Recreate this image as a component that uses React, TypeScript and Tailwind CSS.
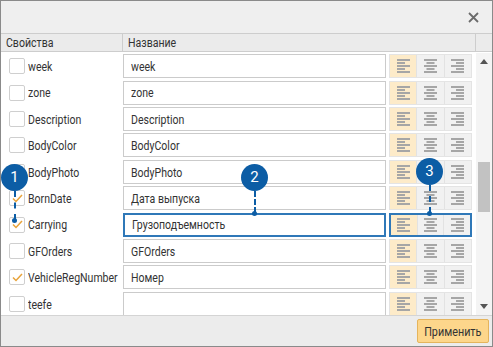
import { ReactNode } from 'react';

type Row = { key: string; title: string; checked?: boolean; active?: boolean };

const rows: Row[] = [
  { key: 'week', title: 'week' },
  { key: 'zone', title: 'zone' },
  { key: 'Description', title: 'Description' },
  { key: 'BodyColor', title: 'BodyColor' },
  { key: 'BodyPhoto', title: 'BodyPhoto' },
  { key: 'BornDate', title: 'Дата выпуска', checked: true },
  { key: 'Carrying', title: 'Грузоподъемность', checked: true, active: true },
  { key: 'GFOrders', title: 'GFOrders' },
  { key: 'VehicleRegNumber', title: 'Номер', checked: true },
  { key: 'teefe', title: '' },
];

const AlignIcon = ({ mode }: { mode: 'left' | 'center' | 'right' }) => {
  const long = 13;
  const short = 8;
  const x = (w: number) => (mode === 'left' ? 0 : mode === 'center' ? (long - w) / 2 : long - w);
  const widths = [long, short, long, short, long];
  return (
    <svg width="13" height="14" viewBox="0 0 13 14">
      {widths.map((w, i) => (
        <rect key={i} x={x(w)} y={i * 3} width={w} height="2" fill="#a6a6a6" />
      ))}
    </svg>
  );
};

const Checkbox = ({ checked }: { checked?: boolean }) => (
  <span className="w-[16px] h-[16px] shrink-0 border border-[#cfcfcf] rounded-[2px] bg-white flex items-center justify-center">
    {checked && (
      <svg width="11" height="9" viewBox="0 0 11 9">
        <path d="M1 4.5 L4 7.5 L10 1" fill="none" stroke="#e8a33a" strokeWidth="1.5" />
      </svg>
    )}
  </span>
);

// narrow text: the original uses a condensed face
const Narrow = ({ children }: { children: ReactNode }) => (
  <span className="inline-block origin-left scale-x-[0.78] whitespace-nowrap">{children}</span>
);

const Callout = ({ n, className, line }: { n: string; className: string; line: string }) => (
  <div className={`absolute flex flex-col items-center ${className}`}>
    <div className="w-[27px] h-[27px] rounded-full bg-[#0c5da5] text-white text-[15px] flex items-center justify-center">
      {n}
    </div>
    <div className={`w-0 border-l-2 border-dashed border-[#0c5da5] ${line}`} />
    <div className="w-[5px] h-[5px] rounded-full bg-[#0c5da5] -mt-[2px]" />
  </div>
);

const AlignGroup = ({ active }: { active?: boolean }) => (
  <div
    className={`flex h-[24px] w-[83px] ${
      active ? 'border-2 border-[#2f78b8]' : 'border border-[#e4e4e4]'
    }`}
  >
    <span className="flex-1 bg-[#fdebc9] flex items-center justify-center">
      <AlignIcon mode="left" />
    </span>
    <span className="flex-1 bg-[#f1f1f1] border-l border-[#e2e2e2] flex items-center justify-center">
      <AlignIcon mode="center" />
    </span>
    <span className="flex-1 bg-[#f1f1f1] border-l border-[#e2e2e2] flex items-center justify-center">
      <AlignIcon mode="right" />
    </span>
  </div>
);

const HeadCell = ({ children, className }: { children?: ReactNode; className: string }) => (
  <div className={`flex items-center px-[5px] text-[12px] text-[#333] ${className}`}>
    <span className="inline-block origin-left scale-x-[0.88] whitespace-nowrap">{children}</span>
  </div>
);

export default function App() {
  return (
    <div
      className="relative w-[493px] h-[347px] border border-[#8a8a8a] bg-white flex flex-col overflow-hidden text-[#333]"
      style={{ fontFamily: 'Roboto, "Liberation Sans", sans-serif' }}
    >
      <div className="h-[32px] shrink-0 bg-[#efefef] flex items-center justify-end pr-[13px]">
        <svg width="11" height="11" viewBox="0 0 11 11">
          <path d="M1 1 L10 10 M10 1 L1 10" stroke="#6b6b6b" strokeWidth="1.8" />
        </svg>
      </div>

      <div className="h-[19px] shrink-0 flex bg-[#ebebeb] border-y border-[#cdcdcd]">
        <HeadCell className="w-[122px] border-r border-[#cdcdcd]">Свойства</HeadCell>
        <HeadCell className="w-[353px] border-r border-[#cdcdcd]">Название</HeadCell>
        <div className="flex-1" />
      </div>

      <div className="flex-1 flex min-h-0 pt-[1px]">
        <div className="flex-1 overflow-hidden">
          {rows.map((r) => (
            <div key={r.key} className="h-[26.4px] flex items-center">
              <div className="w-[122px] flex items-center pl-[8px] gap-[3px] text-[13.5px]">
                <Checkbox checked={r.checked} />
                <Narrow>{r.key}</Narrow>
              </div>
              <div
                className={`w-[263px] h-[24px] flex items-center pl-[7px] text-[13.5px] bg-white ${
                  r.active ? 'border-2 border-[#2f78b8] pl-[6px]' : 'border border-[#cbcbcb]'
                }`}
              >
                <Narrow>{r.title}</Narrow>
              </div>
              <div className="ml-[3px]">
                <AlignGroup active={r.active} />
              </div>
            </div>
          ))}
        </div>
        <div className="w-[16px] shrink-0 bg-[#f4f4f4] flex flex-col items-center py-[6px]">
          <svg width="8" height="5" viewBox="0 0 8 5">
            <path d="M0 5 L4 0 L8 5 Z" fill="#555" />
          </svg>
          <div className="mt-[98px] w-[12px] h-[50px] bg-[#c2c2c2]" />
          <div className="flex-1" />
          <svg width="8" height="5" viewBox="0 0 8 5">
            <path d="M0 0 L4 5 L8 0 Z" fill="#555" />
          </svg>
        </div>
      </div>

      <div className="h-[31px] shrink-0 bg-[#ececec] border-t border-[#d4d4d4] flex items-center justify-end pr-[3px]">
        <button className="w-[72px] h-[24px] bg-[#fdd68b] border border-[#e5b45c] rounded-[2px] text-[13.5px] text-[#333] flex items-center justify-center">
          <span className="inline-block scale-x-[0.8] whitespace-nowrap">Применить</span>
        </button>
      </div>

      <Callout n="1" className="left-[0px] top-[163px]" line="h-[29px]" />
      <Callout n="2" className="left-[240px] top-[163px]" line="h-[22px]" />
      <Callout n="3" className="left-[415px] top-[157px]" line="h-[28px]" />
    </div>
  );
}
